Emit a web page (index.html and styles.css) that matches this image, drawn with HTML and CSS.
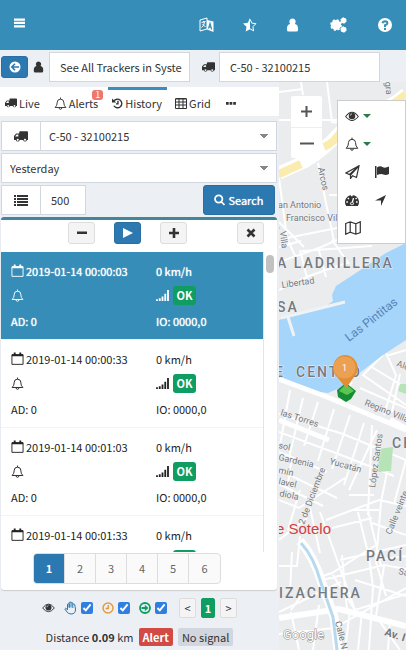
FILE: index.html
```html
<!DOCTYPE html>
<html lang="en">
<head>
<meta charset="utf-8">
<meta name="viewport" content="width=device-width, initial-scale=1">
<title>Tracker history</title>
<link rel="stylesheet" href="styles.css">
</head>
<body>
<svg class="defs" aria-hidden="true">
  <symbol id="truck" viewBox="0 0 16 14"><path fill-rule="evenodd" d="M7 1h8q1 0 1 1v9h-1.200a2.200 2.200 0 0 1-4.300 0H6.500a2.200 2.200 0 0 1-4.300 0H0V6.500L2.500 3.500H6V2q0-1 1-1zM3 4.700 1.300 7H5V4.700zM4.300 9.700a1.100 1.100 0 1 0 .01 0zM12.600 9.700a1.100 1.100 0 1 0 .01 0z"/></symbol>
  <symbol id="user" viewBox="0 0 14 14"><path d="M7 0a3.300 3.500 0 0 1 2.600 5.800Q13 6.500 13 11v1q0 2-2 2H3q-2 0-2-2v-1q0-4.500 3.400-5.200A3.300 3.500 0 0 1 7 0z"/></symbol>
  <symbol id="bell" viewBox="0 0 14 14"><path fill="none" stroke="currentColor" d="M1.200 11.300Q3.500 9.500 3.500 5.500q0-3 3.500-3.200 3.500.2 3.500 3.200 0 4 2.300 5.800zM7 2.300V.6M5.500 11.800Q5.700 13.300 7 13.300q1.300 0 1.500-1.500"/></symbol>
  <symbol id="calendar" viewBox="0 0 14 14"><path fill="none" stroke="currentColor" d="M1 3h12v10.300H1z"/><path d="M1 2.500h12V4.500H1zM3 .5h2v3.500H3zM9 .5h2v3.500H9z"/></symbol>
  <symbol id="signal" viewBox="0 0 14 12"><path d="M0 10h2v2H0zM3 9h2v3H3zM6 7h2v5H6zM9 4h2v8H9zM12 0h2v12h-2z"/></symbol>
  <symbol id="eye" viewBox="0 0 16 12"><path fill="none" stroke="currentColor" stroke-width="1.200" d="M.8 6Q8-3.500 15.200 6 8 15 .8 6z"/><circle cx="8" cy="5.300" r="3.700"/><path fill="none" stroke="#fff" stroke-width=".8" d="M6 5q.2-1.800 2-2"/></symbol>
</svg>

<header class="topbar">
  <button class="icon-btn" aria-label="Menu"><svg width="11" height="10" viewBox="0 0 12 10"><path d="M0 0h12v2.500H0zM0 3.700h12v2.500H0zM0 7.400h12v2.500H0z"/></svg></button>
  <nav class="topnav">
    <a href="#" aria-label="Language"><svg width="15" height="16" viewBox="0 0 15 16"><path fill="none" stroke="currentColor" d="M1 3 8 1v11l-7 2zM2.500 5.500l4-1M4.500 4v1M5.500 5Q5 9 2.500 10.500M3.500 7l3 3"/><path d="M8 3l6.500 1.500V15L8 12.500z"/><path fill="none" stroke="#368eb8" stroke-width="1.200" d="M9.500 11.500 11 6.500l1.700 6M10 9.800l2 .4"/></svg></a>
    <a href="#" aria-label="Favorites"><svg width="14" height="14" viewBox="0 0 14 14"><path d="M7 0v11.300L2.700 13.600l.8-4.800L0 5.400l4.900-.7z"/><path fill="none" stroke="currentColor" d="m7 1.200 1.800 3.900 4.100.6-3 3 .7 4.100L7 10.800"/></svg></a>
    <a href="#" aria-label="Account"><svg width="13" height="14"><use href="#user"/></svg></a>
    <a href="#" class="wide" aria-label="Settings"><svg width="17" height="16" viewBox="0 0 17 16" fill="none" stroke="currentColor"><circle cx="6" cy="8" r="3.200" stroke-width="2.400"/><circle cx="6" cy="8" r="5" stroke-width="1.800" stroke-dasharray="2.100 1.827"/><circle cx="13.500" cy="3.500" r="1.700" stroke-width="1.200"/><circle cx="13.500" cy="3.500" r="2.700" stroke-width="1" stroke-dasharray="1.400 1.427"/><circle cx="13.500" cy="12.500" r="1.700" stroke-width="1.200"/><circle cx="13.500" cy="12.500" r="2.700" stroke-width="1" stroke-dasharray="1.400 1.427"/></svg></a>
    <a href="#" aria-label="Help"><svg width="14" height="14" viewBox="0 0 14 14"><circle cx="7" cy="7" r="7"/><path fill="none" stroke="#368eb8" stroke-width="2" d="M4.500 5.300Q5 3.300 7 3.300q2.400.1 2.400 2Q9.400 6.500 7 7.300V9M7 10v2"/></svg></a>
  </nav>
</header>

<div class="filters">
  <button class="btn primary" aria-label="Back"><svg width="12" height="12" viewBox="0 0 12 12"><circle cx="6" cy="6" r="5.500"/><path fill="none" stroke="#2c78b0" stroke-width="1.600" d="M10 6H3M6 2.800 2.800 6 6 9.200"/></svg></button>
  <label class="lead" for="account"><svg width="11" height="12" aria-label="User"><use href="#user"/></svg></label>
  <input class="field account" id="account" type="text" value="See All Trackers in Syste">
  <label class="lead vehicle" for="vehicle"><svg width="13" height="12" aria-label="Vehicle"><use href="#truck"/></svg></label>
  <input class="field tracker" id="vehicle" type="text" value="C-50 - 32100215">
</div>

<main class="workspace">
  <section class="side">
    <nav class="tabs">
      <a href="#"><svg width="12" height="12"><use href="#truck"/></svg>Live</a>
      <a href="#" class="alerts"><svg width="13" height="13"><use href="#bell"/></svg>Alerts<span class="count">1</span></a>
      <a href="#" class="active"><svg width="11" height="12" viewBox="0 0 12 12"><path d="M0 1v4.500h4.500z"/><path fill="none" stroke="currentColor" stroke-width="1.500" d="M2 4a4.700 4.700 0 1 1 0 5M6.500 3.500V7H4.300"/></svg>History</a>
      <a href="#"><svg width="12" height="11" viewBox="0 0 12 11"><path fill="none" stroke="currentColor" d="M.5 1h11v9.500H.5zM.5 4h11M.5 7h11M4 1v9.500M8 1v9.500M.5.500h11"/></svg>Grid</a>
      <a href="#" class="more" aria-label="More"><svg width="10" height="3" viewBox="0 0 10 3"><path d="M0 0h2.700v2.700H0zM3.600 0h2.700v2.700H3.600zM7.200 0h2.700v2.700H7.200z"/></svg></a>
    </nav>

    <form class="search">
      <div class="group">
        <label class="addon" for="device"><svg width="14" height="13" aria-label="Device"><use href="#truck"/></svg></label>
        <select class="field" id="device"><option>C-50 - 32100215</option></select>
      </div>
      <select class="field period" aria-label="Period"><option>Yesterday</option></select>
      <div class="group">
        <label class="addon" for="limit"><svg width="14" height="11" viewBox="0 0 14 11" aria-label="Limit"><path d="M0 0h2v2H0zM3 0h11v2H3zM0 3h2v2H0zM3 3h11v2H3zM0 6h2v2H0zM3 6h11v2H3zM0 9h2v2H0zM3 9h11v2H3z"/></svg></label>
        <input class="field limit" id="limit" type="text" value="500">
        <button type="button" class="btn primary submit"><svg width="11" height="12" viewBox="0 0 11 12"><path fill="none" stroke="currentColor" stroke-width="1.700" d="M1 5a3.700 3.700 0 1 1 7.400 0A3.700 3.700 0 1 1 1 5zM7.500 8l3 3"/></svg>Search</button>
      </div>
    </form>

    <div class="results">
      <div class="player">
        <button class="btn" aria-label="Slower"><svg width="10" height="10" viewBox="0 0 10 10"><path d="M0 3.500h10v2.500H0z"/></svg></button>
        <button class="btn primary" aria-label="Play"><svg width="10" height="10" viewBox="0 0 10 10"><path d="M0 0l10 5-10 5z"/></svg></button>
        <button class="btn" aria-label="Faster"><svg width="10" height="10" viewBox="0 0 10 10"><path d="M0 3.700h3.700V0h2.600v3.700H10v2.600H6.300V10H3.700V6.300H0z"/></svg></button>
        <button class="btn close" aria-label="Close"><svg width="10" height="10" viewBox="0 0 10 10"><path stroke="currentColor" stroke-width="2.600" d="M1.500 1.500l7 7M8.500 1.500l-7 7"/></svg></button>
      </div>

      <div class="scroller">
        <ul class="points">
          <li class="selected"><span><svg width="13" height="13"><use href="#calendar"/></svg>2019-01-14 00:00:03</span><span>0 km/h</span><span><svg width="13" height="13"><use href="#bell"/></svg></span><span><svg width="13" height="11"><use href="#signal"/></svg><b class="ok">OK</b></span><span>AD: 0</span><span>IO: 0000,0</span></li>
          <li><span><svg width="13" height="13"><use href="#calendar"/></svg>2019-01-14 00:00:33</span><span>0 km/h</span><span><svg width="13" height="13"><use href="#bell"/></svg></span><span><svg width="13" height="11"><use href="#signal"/></svg><b class="ok">OK</b></span><span>AD: 0</span><span>IO: 0000,0</span></li>
          <li><span><svg width="13" height="13"><use href="#calendar"/></svg>2019-01-14 00:01:03</span><span>0 km/h</span><span><svg width="13" height="13"><use href="#bell"/></svg></span><span><svg width="13" height="11"><use href="#signal"/></svg><b class="ok">OK</b></span><span>AD: 0</span><span>IO: 0000,0</span></li>
          <li><span><svg width="13" height="13"><use href="#calendar"/></svg>2019-01-14 00:01:33</span><span>0 km/h</span><span></span><span><svg width="13" height="11"></svg><b class="ok"></b></span></li>
        </ul>
        <div class="track"><div class="thumb"></div></div>
      </div>

      <nav class="pages" aria-label="Pages">
        <a href="#" class="current">1</a><a href="#">2</a><a href="#">3</a><a href="#">4</a><a href="#">5</a><a href="#">6</a>
      </nav>
    </div>

    <div class="toggles">
      <svg width="13" height="10" class="view"><use href="#eye"/></svg>
      <label class="stop"><svg width="13" height="14" viewBox="0 0 13 14"><path fill="none" stroke="currentColor" d="M3.500 9V3.200q.8-1.200 1.700 0V7M5.200 6V1.500q.9-1.300 1.800 0V6.500M7 2q.9-1.300 1.800 0V7M8.800 3.500q1-1 1.900 0L11.500 8q.3 5-4.500 5-2.500 0-4-2L.8 8q.2-1.700 2.700.5"/></svg><input type="checkbox" checked aria-label="Stops"></label>
      <label class="idle"><svg width="12" height="12" viewBox="0 0 12 12"><path fill="none" stroke="currentColor" stroke-width="1.500" d="M1 6a5 5 0 1 1 10 0A5 5 0 1 1 1 6zM6.300 3v3.500H3.500"/></svg><input type="checkbox" checked aria-label="Idle"></label>
      <label class="moving"><svg width="12" height="12" viewBox="0 0 12 12"><path fill="none" stroke="currentColor" stroke-width="1.800" d="M1 6a5 5 0 1 1 10 0A5 5 0 1 1 1 6z"/><path d="M2.500 5h3.300V2.800L9.500 6 5.800 9.200V7H2.500z"/></svg><input type="checkbox" checked aria-label="Moving"></label>
      <div class="steps"><button class="step">&lt;</button><button class="step on">1</button><button class="step">&gt;</button></div>
    </div>
    <footer class="summary"><span>Distance <b>0.09</b> km</span><span class="tag alert">Alert</span><span class="tag">No signal</span></footer>
  </section>

  <section class="map" aria-label="Map">
    <svg class="tiles" viewBox="279 82 127 568" preserveAspectRatio="xMinYMin slice">
      <path fill="#ebecee" d="M279 82h900v900H279z"/>
      <g fill="none" stroke="#fff" stroke-width="2">
        <path d="M279 92l24-3M301 82l2 13M279 120h58M327 82l5 40 74 8M279 178l8 60 10 22M287 238l60-12M318 163l8 40 8 38M329 195h20M279 262l40-14 18-8M279 222l25 25M300 250l8 32M318 247l8 30M279 290l30-14 40-14M302 251l70-5M332 240l17 24M279 247l22-6"/>
        <path d="M290 390l-10 55M303 398l-14 60M318 402l-14 44M334 409l-16 52M350 415l-18 54M364 423l-20 62M377 430l-28 60M279 414l64 20 63 26M279 432l70 26 45 18M383 355l-20 20 43 30M370 366l36 22M360 388l46 20M386 353l10 22-12 40M406 350l-20 6M400 374l-8 38M352 382l-14 22M279 452l48 20M292 456l-4 28M279 470l58 28M279 484l44 22M279 500l20 8 46-30M300 490l-12 40M310 508l10 45M279 540l28-22M320 512l35 98M326 520l53-20 27 6M332 528l40-10M349 495h25M355 510h24M372 425l-4 90M391 452l-10 50-5 60 10 34M406 460l-12 44M358 512l11 45 4 30-4 63M367 506l14 60M376 545l-44 28-16 5M340 560l66-15M318 581l66-16 22 4M279 566h18l3-30M292 552l-2 40M305 590l-14 20M333 575l22 35 51-16M342 555l5 55M384 566l-8 50 24 34M279 612l62-30M279 634l55-6 72-40M291 612l8 38M319 605l-6 45M350 610l-5 40M362 612l-4 38M390 620l-2 30M355 580l51 16M376 560l30-4M372 523l34 12"/>
      </g>
      <path fill="none" stroke="#fff" stroke-width="13" d="M279 173l25-11Q325 150 342 130L375 112q16-5 31-18"/>
      <path fill="none" stroke="#faecae" stroke-width="8" d="M279 174l22-10M324 147q10-4 18-17L375 112q16-5 31-18"/>
      <path fill="#a5d5fa" d="M406 243l-20 10-27 18-23 15-4 9 1 6-9 7-15 4-13 0-12 6-5 2v58l11 4 30 10 8 1 12-5 43-33 23-15z"/>
      <path fill="none" stroke="#f0f3f6" stroke-width="3" d="M281 318l64-16M288 317l6 19"/>
      <path fill="none" stroke="#fff" stroke-width="5" d="M279 379l48 18 79 33M279 420l50 20"/>
      <path fill="none" stroke="#fff" stroke-width="6" d="M279 618l60-9 67 17M390 420l16 9"/>
      <path fill="none" stroke="#fff" stroke-width="9" d="M300 541q14 16 22 42l12 34 4 33"/>
      <path fill="none" stroke="#b6d9f0" stroke-width="3" d="M301 543q13 14 20 40l12 34 4 33"/>
      <path fill="#b7e4b7" d="M379 449l14-2-2 24-13 1zM400 384h6v10l-8-3z"/>
      <g class="streets">
        <text x="278" y="208">an Antonio</text><text x="286" y="221">Francisco Vil</text>
        <text transform="translate(318 168) rotate(78)">Arcos</text><text transform="translate(385 82) rotate(84)">gra</text>
        <text transform="translate(279 227) rotate(82)">. Villa</text>
        <text transform="translate(282 288) rotate(-8)">Libertad</text>
        <text transform="translate(280 415) rotate(18)">las Torres</text>
        <text transform="translate(364 405) rotate(22)">Regino Villa</text><text transform="translate(396 366) rotate(20)">Ale</text>
        <text transform="translate(278 448) rotate(12)">sol</text><text transform="translate(278 460) rotate(12)">Gardenia</text><text transform="translate(278 473) rotate(12)">mín</text><text transform="translate(278 484) rotate(12)">lavel</text><text transform="translate(279 496) rotate(12)">diola</text>
        <text transform="translate(329 464) rotate(15)">Yucatán</text><text transform="translate(304 525) rotate(-69)">2 de Diciembre</text>
        <text transform="translate(375 488) rotate(-82)">López Santos</text><text transform="translate(391 535) rotate(-68)">Calle veinte</text>
        <text transform="translate(398 574) rotate(12)">Sa</text><text transform="translate(335 622) rotate(76)">Calle N</text>
        <text class="avenue" transform="translate(384 635) rotate(18)">Av. I</text>
      </g>
      <text class="lake" transform="translate(349 342) rotate(-38)">Las Pintitas</text>
      <g class="districts"><text x="277" y="268">A LADRILLERA</text><text x="277" y="312">SA</text><text x="275" y="377">E</text><text x="296" y="377">CENTRO</text><text x="392" y="448">CE</text><text x="366" y="561">PACÍ</text><text x="279" y="598">IZACHERA</text></g>
      <text class="city" x="276" y="534">e Sotelo</text>
      <text class="brand" x="283" y="639">Google</text>
      <path fill="#178c35" d="M346 383l10 8-5 8-5 3-8-5-1-7z"/><path fill="#5cc653" d="M346 384l8 7-7 4-8-4z"/>
      <path fill="#e38d35" d="M344 355a13 13 0 0 1 10 22l-8 11-8-10a13 13 0 0 1 6-23z"/><circle cx="344.500" cy="367.500" r="11" fill="#eca051"/><text class="pin" x="342" y="371">1</text>
    </svg>
    <div class="zoom"><button aria-label="Zoom in"><svg width="11" height="11" viewBox="0 0 11 11"><path d="M0 4.500h4.500V0h2v4.500H11v2H6.500V11h-2V6.500H0z"/></svg></button><button aria-label="Zoom out"><svg width="14" height="11" viewBox="0 0 14 11"><path d="M0 4.500h14v2H0z"/></svg></button></div>
    <div class="tools">
      <button class="drop" aria-label="Visibility"><svg width="14" height="11"><use href="#eye"/></svg></button>
      <button class="drop" aria-label="Alarms"><svg width="14" height="14"><use href="#bell"/></svg></button>
      <button aria-label="Send"><svg width="15" height="14" viewBox="0 0 15 14"><path fill="none" stroke="currentColor" stroke-width="1.200" d="M14 .8 1 8l3.500 1.500L14 .8 5.500 10v3.500l2-2.700 4 1.700z"/></svg></button>
      <button aria-label="Geofence"><svg width="14" height="12" viewBox="0 0 14 12"><path d="M0 0h1.500v12H0zM2 1.500q3-2 5.500-.5T14 .500v7.500q-3 1.500-5.500.500T2 9z"/></svg></button>
      <button aria-label="Dashboard"><svg width="14" height="12" viewBox="0 0 14 12"><path d="M1.200 12a7 7 0 1 1 11.600 0z"/><path stroke="#fff" stroke-width="1.300" d="M7 9.500 8.500 4M6 1.700h1.700M2.700 4l1.300 1M10.500 5l1.300-1M1.300 8h1.600M11 8h1.600"/><circle cx="7" cy="9.500" r="1.800" fill="#fff"/><circle cx="7" cy="9.500" r="1"/></svg></button>
      <button class="locate" aria-label="Locate"><svg width="11" height="11" viewBox="0 0 11 11"><path d="M11 0 6 11V5.500H0z"/></svg></button>
      <button aria-label="Map layers"><svg width="16" height="14" viewBox="0 0 16 14"><path fill="none" stroke="currentColor" stroke-width="1.200" d="M.7 2.500 5.200.8l5.600 2L15.300.8v10.700l-4.500 1.700-5.600-2L.7 13.200zM5.200.8v10.400M10.800 2.800v10.400"/></svg></button>
    </div>
  </section>
</main>
</body>
</html>
```
FILE: styles.css
```css
* { box-sizing: border-box; }

body {
  margin: 0;
  min-height: 100vh;
  display: flex;
  flex-direction: column;
  background: #ecf0f5;
  color: #333;
  font: 11px/18px "Noto Sans CJK SC", "Open Sans", sans-serif;
}

button, input, select { font: inherit; color: inherit; margin: 0; }
button { padding: 0; border: 0; background: none; }
a { color: inherit; text-decoration: none; }
svg { fill: currentColor; flex: none; }
.defs { display: none; }

.topbar {
  height: 50px;
  padding: 0 10px 0 14px;
  display: flex;
  align-items: center;
  justify-content: space-between;
  background: #368eb8;
  color: #fff;
}
.icon-btn { display: flex; margin-bottom: 4px; }
.topnav { display: flex; gap: 20px; }
.topnav a { width: 23px; display: flex; justify-content: center; align-items: center; }
.topnav .wide { width: 29px; }

.filters { display: flex; align-items: center; padding: 2px 0 0 1px; height: 32px; }
.lead { width: 21px; display: flex; justify-content: center; }
.vehicle { width: 29px; padding-left: 8px; }
.field {
  height: 30px;
  min-width: 0;
  padding: 0 6px 0 10px;
  border: 1px solid #d2d6de;
  border-radius: 0;
  background: #fff;
  outline: 0;
}
.account { width: 141px; }
.tracker { width: 161px; }

.btn {
  width: 27px;
  height: 22px;
  display: flex;
  align-items: center;
  justify-content: center;
  border: 1px solid #ddd;
  border-radius: 3px;
  background: #f4f4f4;
}
.primary { background: #2c78b0; border-color: #2a6fa3; color: #fff; }

.workspace { flex: 1; display: grid; grid-template-columns: 279px minmax(0, 1fr); }
.side { background: #ecf0f5; padding-top: 5px; }

.tabs { display: flex; background: #fff; height: 29px; padding-left: 1px; }
.tabs a {
  position: relative;
  display: flex;
  align-items: center;
  gap: 2px;
  padding: 0 5px 0 4px;
  border-top: 3px solid transparent;
}
.tabs .alerts { margin-left: 5px; margin-right: 5px; }
.tabs .active { border-color: #3c8dbc; margin-right: 4px; }
.tabs .more { padding-left: 10px; }
.count {
  position: absolute;
  top: 0;
  right: 0;
  width: 11px;
  border-radius: 3px;
  background: #ee7670;
  color: #fff;
  font-size: 9px;
  line-height: 10px;
  text-align: center;
}

.search { display: flex; flex-direction: column; gap: 2px; padding: 4px 2px 0 1px; border-top: 1px solid #eee; }
.group { display: flex; }
.addon {
  width: 39px;
  display: flex;
  align-items: center;
  justify-content: center;
  border: 1px solid #d2d6de;
  border-right: 0;
  background: #fff;
}
select.field {
  flex: 1;
  padding: 0 8px;
  appearance: none;
  background-color: #fff;
  background-image: linear-gradient(to bottom left, #888 50%, transparent 50%), linear-gradient(to bottom right, #888 50%, transparent 50%);
  background-size: 4px 5px;
  background-position: right 12px center, right 8px center;
  background-repeat: no-repeat;
}
select.period { flex: none; height: 30px; }
.limit { width: 46px; }
.submit { width: 72px; height: 30px; gap: 3px; margin: 0 2px 0 auto; text-shadow: 0 0 1px #fff; }

.results { margin: 2px 2px 0 1px; border-top: 3px solid #43869c; border-radius: 3px; background: #fff; padding-bottom: 6px; box-shadow: 0 1px 1px #ccc; }
.player { display: flex; gap: 19px; padding: 2px 13px 8px 67px; }
.close { margin-left: auto; }
.scroller { display: flex; height: 300px; }
.points { flex: 1; margin: 0; padding: 0; list-style: none; overflow: hidden; border-right: 1px solid #e3e3e8; color: #222; }
.points li {
  height: 88px;
  padding: 6px 10px;
  display: grid;
  grid-template-columns: 145px 1fr;
  grid-template-rows: repeat(3, 25px);
  align-items: center;
  border-bottom: 1px solid #f4f4f4;
}
.points span { display: flex; align-items: center; gap: 2px; }
.points .selected { background: #368eb8; color: #fff; text-shadow: 0 0 1px #fff; }
.ok { background: #0f9d62; color: #fff; border-radius: 3px; width: 23px; height: 19px; line-height: 19px; text-align: center; margin-left: 2px; text-shadow: none; }
.track { width: 13px; padding: 3px 2px; }
.thumb { width: 8px; height: 18px; border-radius: 4px; background: #c1c1c1; }

.pages { display: flex; width: max-content; margin: 1px 0 0 32px; border: 1px solid #ddd; border-radius: 4px; overflow: hidden; background: #fafafa; color: #666; }
.pages a { width: 31px; line-height: 29px; text-align: center; border-right: 1px solid #ddd; }
.pages a:last-child { border-right: 0; }
.pages .current { background: #2c78b0; color: #fff; font-weight: bold; }

.toggles { display: flex; align-items: center; justify-content: center; gap: 9px; height: 35px; padding-top: 1px; }
.toggles label { display: flex; align-items: center; gap: 4px; }
.toggles input { width: 12px; height: 12px; accent-color: #2f7fe0; }
.stop { color: #2c78b0; }
.idle { color: #e39b3e; }
.moving { color: #0f9d62; }
.steps { display: flex; gap: 5px; margin-left: 3px; }
.step { width: 17px; height: 20px; border: 1px solid #ddd; border-radius: 2px; background: #f4f4f4; line-height: 18px; }
.step.on { width: 14px; background: #0f9d62; border-color: #0f9d62; color: #fff; font-weight: bold; }

.summary { display: flex; justify-content: center; align-items: center; gap: 5px; height: 24px; }
.tag { padding: 0 4px; border-radius: 2px; background: #d2d6de; }
.alert { background: #d14a43; color: #fff; font-weight: bold; }

.map { position: relative; overflow: hidden; background: #ebecee; }
.tiles { position: absolute; inset: 0; width: 100%; height: 100%; }
.tiles text { font-family: Roboto, sans-serif; paint-order: stroke; stroke: #f4f4f5; stroke-width: 1px; }
.streets text { font-size: 9px; fill: #73777c; }
.tiles .avenue { font-size: 11px; font-weight: bold; }
.districts text { font-size: 14px; font-weight: 500; letter-spacing: 2px; fill: #757a80; }
.tiles .lake { font-size: 12px; fill: #5883b5; stroke: none; }
.tiles .city { font-family: "Liberation Sans", sans-serif; font-size: 15px; fill: #d3403d; stroke: #d3403d; stroke-width: 0; }
.tiles .brand { font-size: 13px; fill: #fff; stroke: #888; }
.tiles .pin { font-size: 9px; fill: #fff; stroke: none; }

.zoom { position: absolute; top: 14px; left: 12px; width: 31px; background: #fff; border-radius: 2px; color: #555; }
.zoom button { width: 100%; height: 31px; display: flex; align-items: center; justify-content: center; }
.zoom button + button { border-top: 1px solid #eee; }

.tools {
  position: absolute;
  top: 18px;
  right: 0;
  width: 69px;
  padding: 1px 4px;
  display: grid;
  grid-template-columns: 1fr 1fr;
  grid-auto-rows: 28px;
  background: #fff;
  border: 1px solid #ccc;
}
.tools button { display: flex; align-items: center; padding-left: 3px; }
.tools .drop { grid-column: span 2; gap: 4px; }
.drop::after { content: ""; border: 4px solid transparent; border-top-color: #2b7a4b; border-bottom: 0; }
```
